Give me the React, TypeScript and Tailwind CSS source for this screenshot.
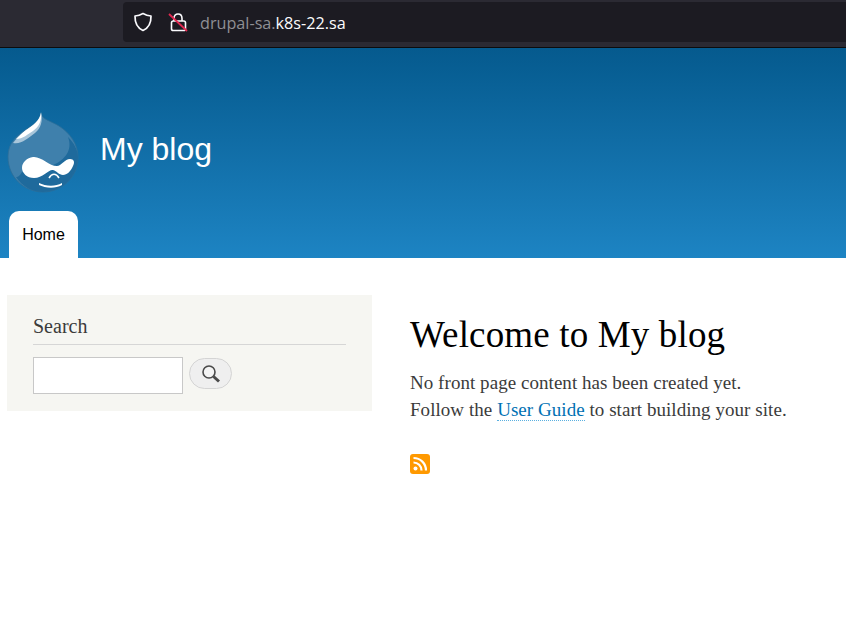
function DrupalLogo() {
  return (
    <svg width="72" height="81" viewBox="0 0 72 81" className="shrink-0 mb-[2px]">
      {/* drop body */}
      <path d="M34 1C34 7 44 9 52 14C63 21 71 32 71 45C71 65 55 80 36 80C17 80 1 65 1 45C1 30 10 24 18 18C26 13 33 9 34 1Z" fill="#3f80ac" stroke="#2b6d98" strokeWidth="0.8" />
      {/* dark lower crescent */}
      <path d="M61 25C66 38 58 48 46 53L15 60C12 65 10 65 9 65C15 74 25 80 36 80C55 80 71 65 71 45C71 38 67 31 61 25Z" fill="#1f6a9c" />
      {/* highlight */}
      <path d="M6 31C9 27 13 23 18 19C25 14 33 9 34 0C36 9 34 16 28 21C21 26 14 33 6 31Z" fill="#a9c6da" />
      <path d="M9 27C12 24 15 21 19 18C25 14 33 9 34 1C35 8 32 15 26 19C21 22 16 27 9 27Z" fill="#ffffff" />
      {/* face */}
      <path d="M26 45C34 44 42 54 50 54C54 54 58 47 63 47C67 47 68 50 66 54C64 59 60 63 56 63C52 63 50 59 46 58C42 57 36 66 27 66C20 66 15 61 15 56C15 50 20 46 26 45Z" fill="#ffffff" />
      <path d="M42 66C45 61 49 61 52 66" fill="none" stroke="#ffffff" strokeWidth="1.5" />
      <path d="M32 71C38 74 48 75 55 71L55 73C48 77 38 76 32 73Z" fill="#ffffff" />
    </svg>
  );
}

function ShieldIcon() {
  return (
    <svg width="20" height="20" viewBox="0 0 20 20" fill="none" stroke="#fbfbfe" strokeWidth="1.7" strokeLinejoin="round">
      <path d="M10 1.5C12.5 3 15 3.8 18 4C18.2 11 15.5 16 10 18.5C4.5 16 1.8 11 2 4C5 3.8 7.5 3 10 1.5Z" />
    </svg>
  );
}

function BrokenLockIcon() {
  return (
    <svg width="20" height="20" viewBox="0 0 20 20" fill="none">
      <path d="M6 9V6.5C6 3.5 7.8 2 10 2C12.2 2 14 3.5 14 6.5V9" stroke="#fbfbfe" strokeWidth="1.6" />
      <rect x="3.5" y="9" width="14" height="9.5" rx="1.8" stroke="#fbfbfe" strokeWidth="1.6" />
      <path d="M1 2L19 19" stroke="#e22850" strokeWidth="1.8" />
    </svg>
  );
}

function SearchIcon() {
  return (
    <svg width="20" height="20" viewBox="0 0 20 20" fill="none">
      <circle cx="8" cy="8" r="6" stroke="#4a4a4a" strokeWidth="1.6" fill="#f4f4f4" />
      <path d="M12.5 12.5L18 17.5" stroke="#4a4a4a" strokeWidth="3" />
    </svg>
  );
}

function RssIcon() {
  return (
    <svg width="20" height="20" viewBox="0 0 20 20" fill="none">
      <rect width="20" height="20" rx="3" fill="#ff9900" />
      <circle cx="5.5" cy="14.5" r="2" fill="#ffffff" />
      <path d="M3.5 8.5C8 8.5 11.5 12 11.5 16.5" stroke="#ffffff" strokeWidth="2.2" />
      <path d="M3.5 4C10.5 4 16 9.5 16 16.5" stroke="#ffffff" strokeWidth="2.2" />
    </svg>
  );
}

export default function App() {
  return (
    <div className="w-[846px] h-[629px] overflow-hidden bg-white font-['Liberation_Serif',serif]">
      <div className="h-[48px] bg-[#2b2a33] border-b border-[#0c0c0d] pl-[123px] pt-[2px]">
        <div className="h-[40px] rounded-l-[4px] bg-[#1c1b22] flex items-center pl-[10px]">
          <ShieldIcon />
          <div className="ml-[15px]">
            <BrokenLockIcon />
          </div>
          <span className="ml-[12px] mt-[3px] text-[16.2px] font-['Open_Sans',sans-serif] text-[#8f8f94]">
            drupal-sa.<span className="text-[#fbfbfe]">k8s-22.sa</span>
          </span>
        </div>
      </div>

      <header className="h-[210px] bg-gradient-to-b from-[#055a8e] to-[#1d84c3] pt-[64px] flex flex-col font-['Liberation_Sans',sans-serif]">
        <div className="flex items-center h-[82px] pl-[7px]">
          <DrupalLogo />
          <h1 className="ml-[21px] mb-[8px] text-[32px] text-white">My blog</h1>
        </div>
        <nav className="pl-[9px] mt-[17px]">
          <a className="block w-[69px] h-[47px] bg-white rounded-t-[10px] text-center text-[16px] leading-[47px] text-black">
            Home
          </a>
        </nav>
      </header>

      <main className="flex pl-[7px] pt-[37px]">
        <aside className="w-[365px] h-[116px] bg-[#f6f6f2] pl-[26px] pr-[26px] pt-[20px]">
          <h2 className="text-[20px] leading-[22px] text-[#3b3b3b] border-b border-[#d6d6d6] pb-[7px]">
            Search
          </h2>
          <div className="flex items-center mt-[12px]">
            <input className="w-[150px] h-[37px] bg-white border border-[#c8c8c8]" />
            <button className="ml-[6px] mb-[4px] w-[43px] h-[31px] rounded-[16px] bg-[#efefef] border border-[#d4d4d4] flex items-center justify-center">
              <SearchIcon />
            </button>
          </div>
        </aside>
        <div className="ml-[38px] pt-[18px]">
          <h1 className="text-[37px] leading-[44px] text-black tracking-[0.15px]">Welcome to My blog</h1>
          <p className="mt-[12px] text-[19px] leading-[27px] text-[#3b3b3b] tracking-[0.05px]">
            No front page content has been created yet.
            <br />
            Follow the{" "}
            <a className="text-[#0071b3] border-b border-dotted border-[#5bb0e0]">User Guide</a> to start building your site.
          </p>
          <div className="mt-[31px]">
            <RssIcon />
          </div>
        </div>
      </main>
    </div>
  );
}
